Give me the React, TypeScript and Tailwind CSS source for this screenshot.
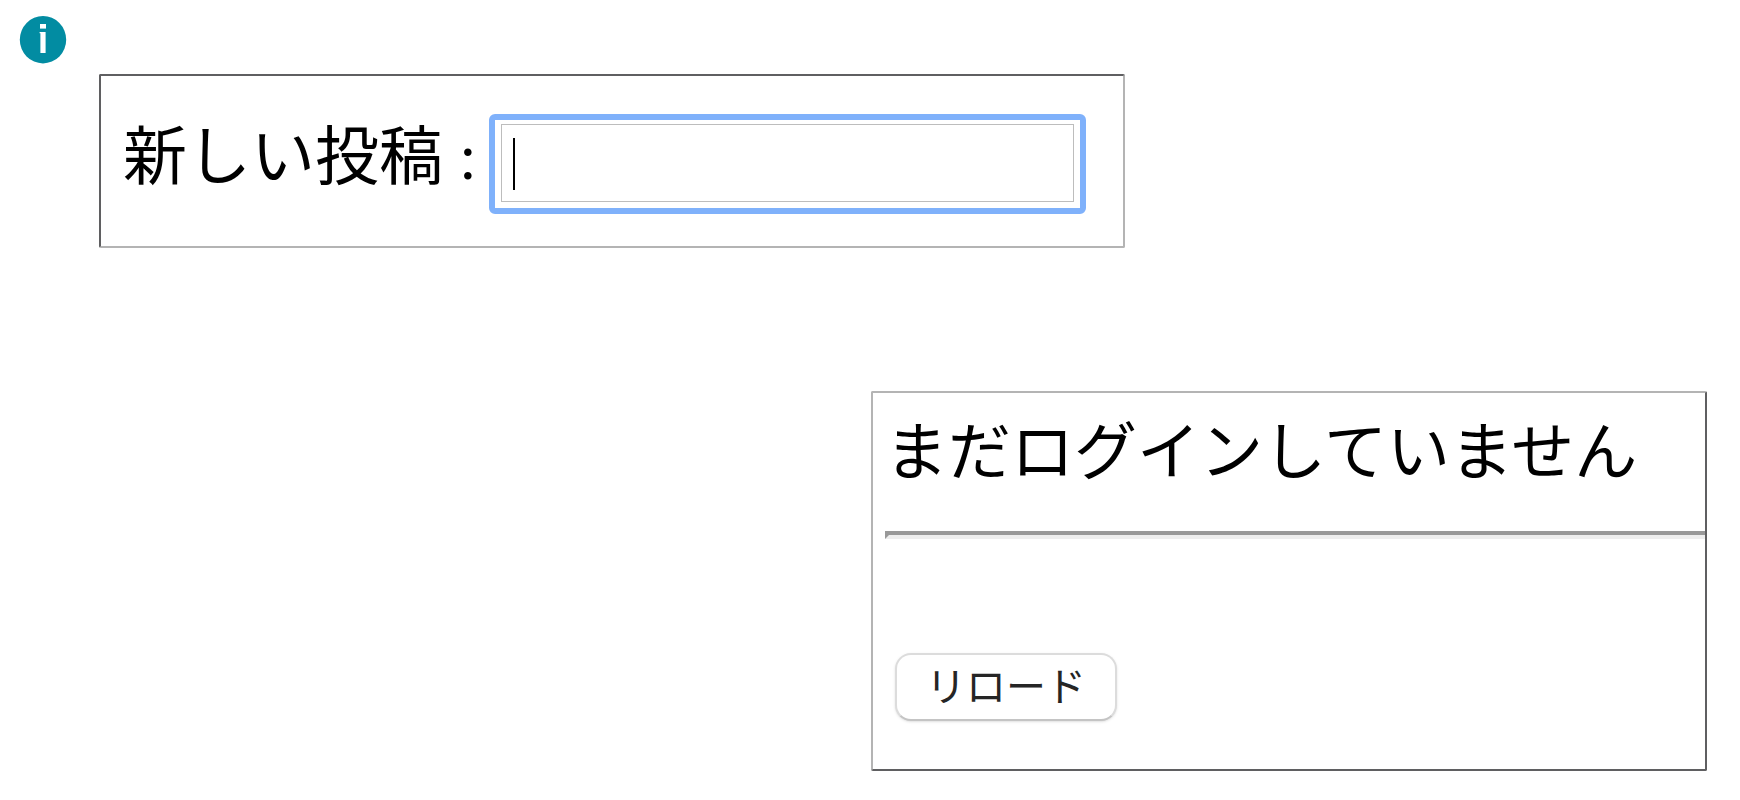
import { useState, FormEvent, useCallback } from 'react';

/**
 * Round information mark
 */
function InfoIcon() {
  return (
    <svg className="h-12 w-12" viewBox="0 0 48 48" role="img" aria-label="info">
      <ellipse cx="24" cy="23.7" rx="23.2" ry="23.7" fill="#028ca2" />
      <rect x="21" y="8" width="6" height="4.6" fill="#fff" />
      <path d="M20.6 16H26.6V37H21.4V17.2H20.6Z" fill="#fff" />
    </svg>
  );
}

/**
 * New post form with a focused text field
 */
function PostForm() {
  const [text, setText] = useState('');

  const handleSubmit = useCallback((e: FormEvent) => {
    e.preventDefault();
    setText('');
  }, []);

  return (
    <form
      onSubmit={handleSubmit}
      className="flex max-w-full items-center rounded-xs border-2 border-t-[#5f5f61] border-r-[#b4b4b4] border-b-[#b4b4b4] border-l-[#5f5f61] pt-[38px] pr-[37px] pb-8 pl-[22px]"
    >
      <label htmlFor="post" className="mr-3 shrink-0 pb-3 text-[64px] leading-[80px] whitespace-pre">
        新しい投稿 :
      </label>
      <div className="relative min-w-0 rounded-md border-6 border-[#7fb1fb] px-1.5 pt-1 pb-1.5">
        <input
          id="post"
          type="text"
          value={text}
          onChange={(e) => setText(e.target.value)}
          autoComplete="off"
          className={`block h-[78px] w-[573px] max-w-full border border-[#bdbdbd] bg-white px-3 text-[44px] outline-none ${text ? 'caret-black' : 'caret-transparent'}`}
        />
        {!text && <span className="pointer-events-none absolute top-[18px] left-[18px] h-[52px] w-0.5 bg-black" />}
      </div>
    </form>
  );
}

/**
 * Login status message with a reload button
 */
function LoginStatus() {
  return (
    <section className="w-[836px] max-w-full rounded-xs border-2 border-t-[#b4b4b4] border-r-[#5f5f61] border-b-[#5f5f61] border-l-[#b4b4b4] pb-12">
      <p className="pt-5 pl-3 text-[63px] leading-[80px]">まだログインしていません</p>
      <hr className="mt-[38px] ml-3 h-2 border-t-4 border-b-4 border-l-4 border-t-[#999] border-b-[#eee] border-l-[#999]" />
      <button
        type="button"
        onClick={() => window.location.reload()}
        className="mt-[114px] ml-[22px] block h-[68px] rounded-2xl border-2 border-[#dcdcdc] border-b-[#c4c4c4] bg-white px-[29px] pb-1.5 font-['Noto_Sans_CJK_JP',sans-serif] text-[40px] leading-none text-[#252525] shadow-sm"
      >
        リロード
      </button>
    </section>
  );
}

export default function App() {
  return (
    <main className="flex min-h-screen flex-col bg-white pt-4 pr-[33px] pl-[19px] font-['Liberation_Serif','Noto_Sans_CJK_JP',serif] text-black">
      <InfoIcon />
      <div className="mt-2.5 ml-20 flex">
        <PostForm />
      </div>
      <div className="mt-[143px] flex justify-end">
        <LoginStatus />
      </div>
    </main>
  );
}
